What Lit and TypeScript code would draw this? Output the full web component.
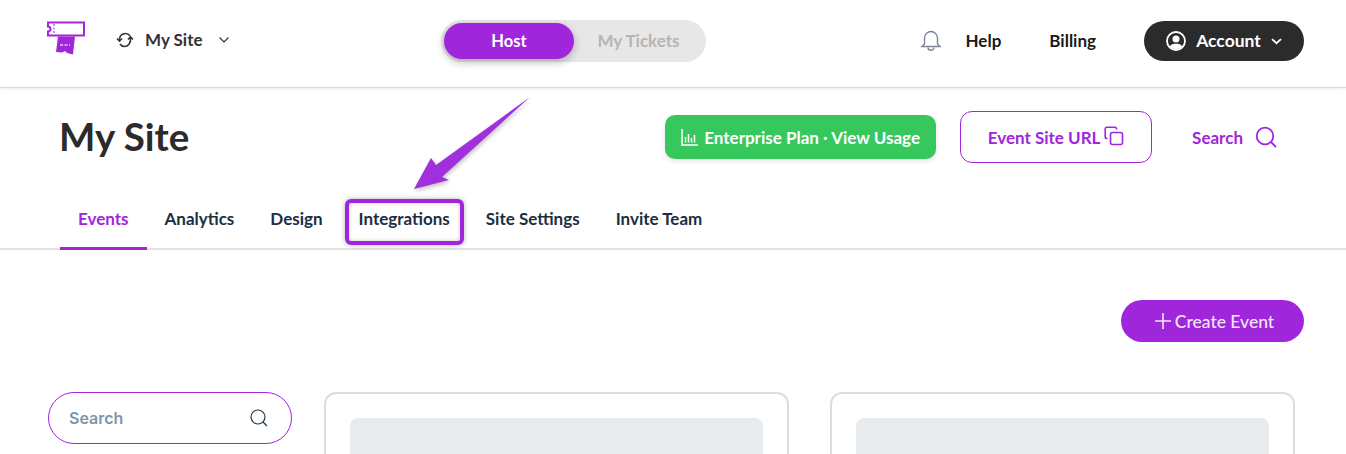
import { LitElement, html, css, svg } from "lit";
import { customElement } from "lit/decorators.js";

@customElement("app-root")
export class AppRoot extends LitElement {
  static styles = css`
    :host { display: block; position: relative; width: 1346px; height: 454px; overflow: hidden; background: #fff; font-family: Lato, "Open Sans", sans-serif; color: #2b2b2b; }
    svg { display: block; flex: none; }
    header { height: 87px; box-sizing: content-box; border-bottom: 1px solid #d9d9d9; box-shadow: 0 1px 3px rgba(0,0,0,.08); display: grid; grid-template-columns: 394px 265px 1fr; align-items: center; padding: 0 42px 0 47px; }
    .left { display: flex; align-items: center; }
    .logo { margin-top: -10px; }
    .site { display: flex; align-items: center; margin: 0 0 8px 31px; font-size: 17px; font-weight: 700; color: #333; }
    .site .name { margin: 0 15px 0 11px; }
    .toggle { display: flex; height: 42px; width: 265px; margin-top: -6px; padding: 3px; box-sizing: border-box; border-radius: 21px; background: #e7e7e7; font-size: 16.500px; font-weight: 700; align-items: center; }
    .toggle .on { width: 130px; height: 36px; border-radius: 18px; background: #a026dc; color: #fff; display: flex; align-items: center; justify-content: center; box-shadow: 0 3px 8px rgba(0,0,0,.28); }
    .toggle .off { flex: 1; text-align: center; color: #b5b5b5; font-size: 17px; }
    .right { display: flex; align-items: center; justify-content: flex-end; margin-top: -7px; font-size: 17px; font-weight: 700; color: #1a1a1a; }
    .help { margin: 0 48px 0 24px; }
    .account { margin: 2px 0 0 48px; width: 160px; height: 40px; border-radius: 20px; background: #2b2b2b; color: #fff; display: flex; align-items: center; justify-content: center; gap: 10px; font-size: 17.500px; }
    .account span { margin-bottom: 2px; }
    .title-row { display: flex; align-items: center; padding: 23px 69px 0 60px; height: 52px; }
    h1 { margin: -2px 0 0 -1px; font-size: 38.500px; line-height: 52px; font-weight: 700; color: #2b2b2b; flex: 1; }
    .plan { width: 271px; height: 44px; border-radius: 10px; background: #36c85c; color: #fff; font-size: 17px; font-weight: 700; display: flex; align-items: center; justify-content: center; gap: 6px; box-shadow: 0 2px 5px rgba(0,0,0,.12); }
    .url { width: 192px; height: 52px; box-sizing: border-box; margin-left: 24px; border: 1px solid #a026dc; border-radius: 12px; color: #a026dc; font-size: 17px; font-weight: 700; display: flex; align-items: center; justify-content: center; gap: 4px; }
    .url svg { margin-top: -2px; }
    .find { margin-left: 40px; display: flex; align-items: center; gap: 12px; color: #a026dc; font-size: 17px; font-weight: 700; }
    nav { display: flex; height: 62px; margin-top: 25px; padding: 0 0 0 60px; border-bottom: 2px solid #e2e2e2; box-sizing: border-box; }
    .tab { position: relative; padding: 0 18px; height: 62px; box-sizing: border-box; line-height: 62px; font-size: 17px; font-weight: 700; color: #1b2e42; white-space: nowrap; }
    .tab.active { color: #a026dc; }
    .tab.active::after { content: ""; position: absolute; left: 0; right: 0; bottom: 0; height: 3px; background: #a026dc; }
    .actions { display: flex; justify-content: flex-end; padding: 50px 42px 0 0; }
    .create { width: 183px; height: 42px; box-sizing: border-box; padding-left: 4px; border-radius: 21px; background: #a026dc; color: #f3e6fb; font-size: 17.500px; font-weight: 500; display: flex; align-items: center; justify-content: center; gap: 4px; }
    .content { display: flex; gap: 32px; padding: 50px 0 0 48px; }
    .search { width: 244px; height: 52px; box-sizing: border-box; border: 1px solid #a026dc; border-radius: 26px; display: flex; align-items: center; justify-content: space-between; padding: 0 23px 0 20px; font-family: Inter, sans-serif; font-size: 16px; font-weight: 600; color: #7f95a8; }
    .cards { display: grid; grid-template-columns: 465px 465px; column-gap: 41px; }
    .card { height: 120px; box-sizing: border-box; border: 2px solid #dfdbe3; border-bottom: 0; border-radius: 12px 12px 0 0; padding: 24px 24px 0; }
    .thumb { height: 100px; border-radius: 8px 8px 0 0; background: #e8ebee; }
    .mark { position: absolute; left: 345px; top: 199px; width: 119px; height: 46px; box-sizing: border-box; border: 4px solid #a026dc; border-radius: 6px; box-shadow: 0 0 5px rgba(0,0,0,.3), inset 0 0 4px rgba(0,0,0,.2); }
    .arrow { position: absolute; left: 400px; top: 85px; filter: drop-shadow(1px 2px 2px rgba(0,0,0,.25)); }
  `;

  render() {
    return html`
      <header>
        <div class="left">
          <svg class="logo" width="38" height="36" viewBox="0 0 38 36">
            <path d="M1 1.500H37V14.500H1V10.500A2.500 2.500 0 0 0 3.500 8A2.500 2.500 0 0 0 1 5.500Z" fill="#fff" stroke="#a026dc" stroke-width="2"/>
            <path d="M7 3V13" stroke="#c78ae8" stroke-width="2" stroke-dasharray="2 1.500"/>
            <path d="M11 15.500H28L26 33.500L20 32L18 30L15 31.500L9 31Z" fill="#a026dc"/>
            <path d="M13 24H23" stroke="#e6c8f6" stroke-width="1.500" stroke-dasharray="3 1.500"/>
          </svg>
          <div class="site">
            <svg width="18" height="16" viewBox="0 0 18 16" fill="none" stroke="#333" stroke-width="1.600">
              <path d="M3.500 8.500C3 4 6 1.500 9.500 1.500C11.500 1.500 13 2.500 14 4M14.500 7C15 11 12 14.500 8.500 14.500C6.500 14.500 5 13.500 4 12"/>
              <path d="M1 6.500L3.500 9L6 6.500M12 7.500L14.500 5L17 7.500"/>
            </svg>
            <span class="name">My Site</span>
            <svg width="12" height="8" viewBox="0 0 12 8" fill="none" stroke="#333" stroke-width="1.200"><path d="M1.500 1.500L6 6L10.500 1.500"/></svg>
          </div>
        </div>
        <div class="toggle"><div class="on">Host</div><div class="off">My Tickets</div></div>
        <div class="right">
          <svg width="22" height="24" viewBox="0 0 22 24" fill="none" stroke="#7c8694" stroke-width="1.400">
            <path d="M4.500 16V10a6.500 6.500 0 0 1 13 0v6l2.500 2.500H2Z"/>
            <path d="M8 19.500a3 2.800 0 0 0 6 0"/>
          </svg>
          <span class="help">Help</span>
          <span>Billing</span>
          <div class="account">
            <svg width="20" height="20" viewBox="0 0 20 20">
              <circle cx="10" cy="10" r="9" fill="none" stroke="#fff" stroke-width="1.800"/>
              <circle cx="10" cy="8" r="3.500" fill="#fff"/>
              <path d="M3.500 16C5 13 7.500 12.800 10 12.800S15 13 16.500 16L10 19Z" fill="#fff"/>
            </svg>
            <span>Account</span>
            <svg width="11" height="7" viewBox="0 0 11 7" fill="none" stroke="#fff" stroke-width="1.800"><path d="M1 1.200L5.500 5.200L10 1.200"/></svg>
          </div>
        </div>
      </header>

      <div class="title-row">
        <h1>My Site</h1>
        <div class="plan">
          <svg width="17" height="17" viewBox="0 0 17 17" fill="none" stroke="#fff" stroke-width="1.500"><path d="M1 0V16H17M4.500 8V13.500M7.500 5V13.500M10.500 9V13.500M13.500 6V13.500"/></svg>
          <span>Enterprise Plan · View Usage</span>
        </div>
        <div class="url">
          <span>Event Site URL</span>
          <svg width="20" height="20" viewBox="0 0 20 20" fill="none" stroke="#a026dc" stroke-width="1.600">
            <rect x="6.500" y="6.500" width="12" height="12" rx="2"/>
            <path d="M3.500 12.500H3A1.800 1.800 0 0 1 1.200 10.700V3A1.800 1.800 0 0 1 3 1.200H10.700A1.800 1.800 0 0 1 12.500 3V3.500"/>
          </svg>
        </div>
        <div class="find">
          <span>Search</span>
          <svg width="22" height="22" viewBox="0 0 22 22" fill="none" stroke="#a026dc" stroke-width="1.800"><circle cx="10" cy="10" r="8.300"/><path d="M16 16L21 21"/></svg>
        </div>
      </div>

      <nav>
        <div class="tab active">Events</div>
        <div class="tab">Analytics</div>
        <div class="tab">Design</div>
        <div class="tab">Integrations</div>
        <div class="tab">Site Settings</div>
        <div class="tab">Invite Team</div>
      </nav>

      <div class="actions">
        <div class="create">
          <svg width="16" height="16" viewBox="0 0 16 16" stroke="#f3e6fb" stroke-width="1.600"><path d="M8 0V16M0 8H16"/></svg>
          <span>Create Event</span>
        </div>
      </div>

      <div class="content">
        <div class="search">
          <span>Search</span>
          <svg width="18" height="18" viewBox="0 0 18 18" fill="none" stroke="#24384a" stroke-width="1.200"><circle cx="8" cy="8" r="7"/><path d="M13 13L17 17"/></svg>
        </div>
        <div class="cards">
          <div class="card"><div class="thumb"></div></div>
          <div class="card"><div class="thumb"></div></div>
        </div>
      </div>

      <div class="mark"></div>
      <svg class="arrow" width="140" height="110" viewBox="0 0 140 110">
        ${svg`<path d="M130 12L36 80L31 73L14 104L49 95L42 92Z" fill="#a02fdc"/>`}
      </svg>
    `;
  }
}
